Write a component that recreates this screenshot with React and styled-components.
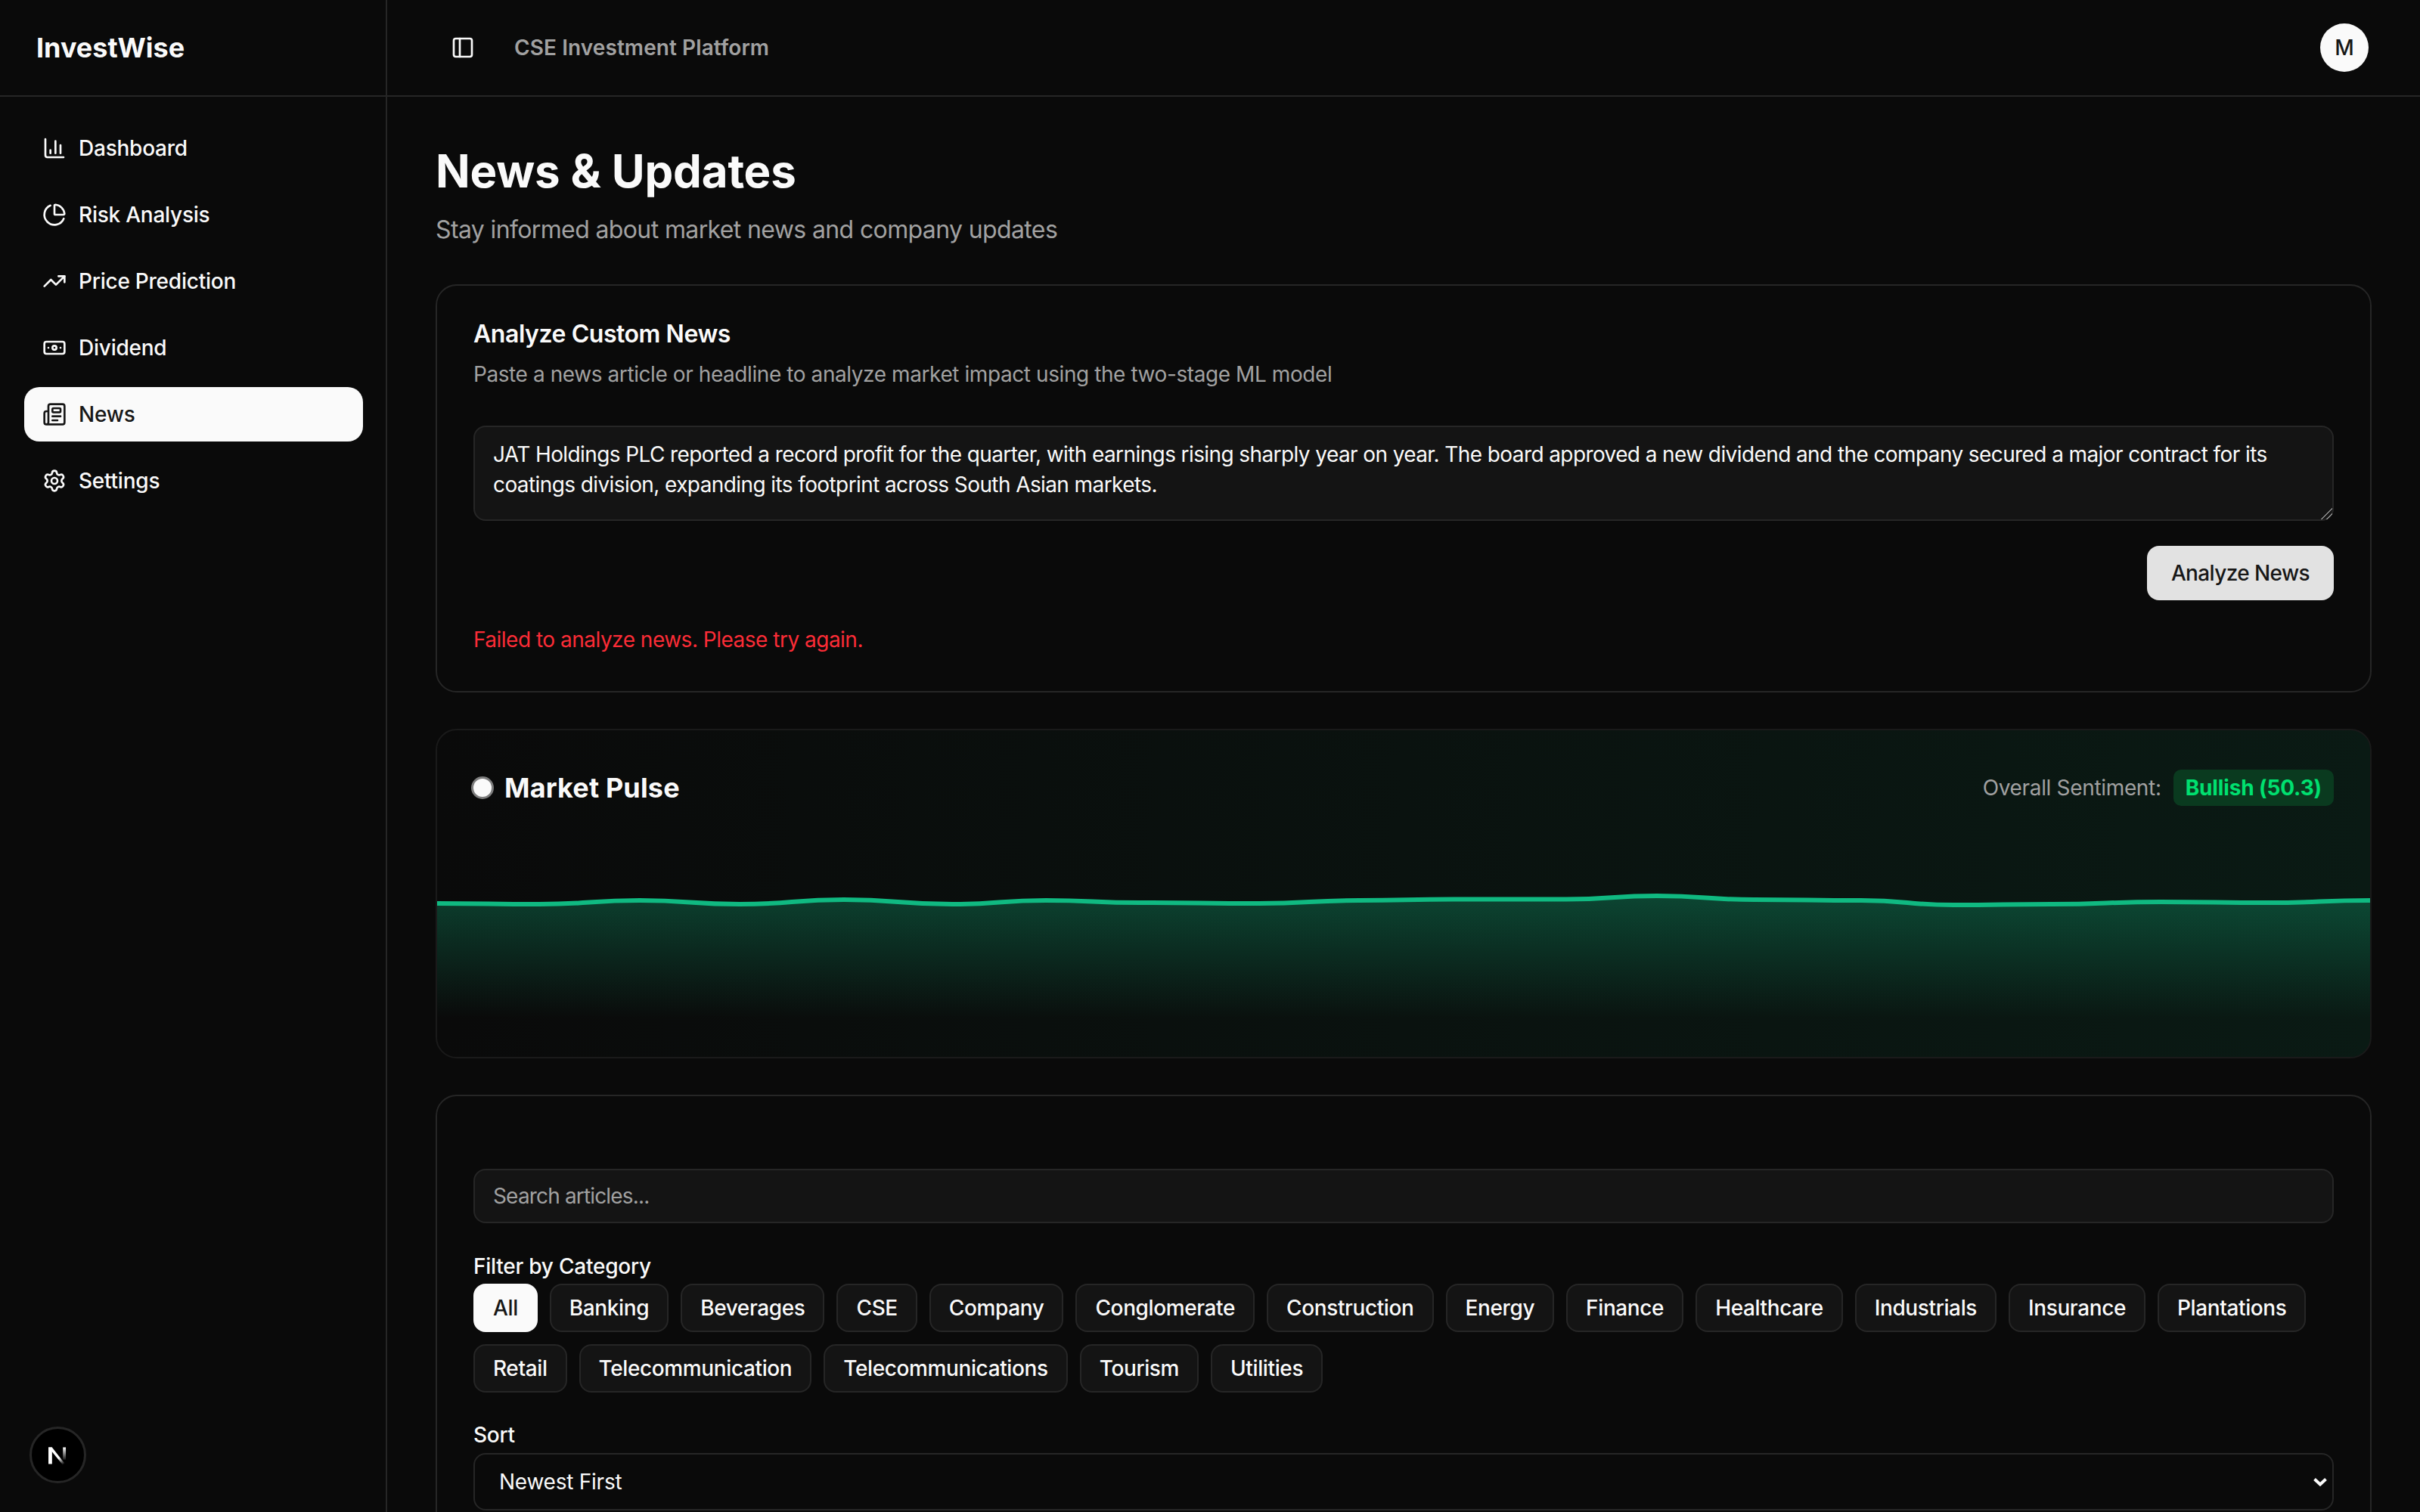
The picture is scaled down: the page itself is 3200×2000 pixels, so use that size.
import React from 'react';
import styled, { createGlobalStyle } from 'styled-components';
import { ChartColumn, ChartPie, TrendingUp, Banknote, Newspaper, Settings, PanelLeft } from 'lucide-react';

const navItems = [
  { label: 'Dashboard', icon: ChartColumn },
  { label: 'Risk Analysis', icon: ChartPie },
  { label: 'Price Prediction', icon: TrendingUp },
  { label: 'Dividend', icon: Banknote },
  { label: 'News', icon: Newspaper, active: true },
  { label: 'Settings', icon: Settings },
];

const categories = [
  'All', 'Banking', 'Beverages', 'CSE', 'Company', 'Conglomerate', 'Construction', 'Energy', 'Finance',
  'Healthcare', 'Industrials', 'Insurance', 'Plantations', 'Retail', 'Telecommunication', 'Telecommunications',
  'Tourism', 'Utilities',
];

const newsText =
  'JAT Holdings PLC reported a record profit for the quarter, with earnings rising sharply year on year. The board approved a new dividend and the company secured a major contract for its coatings division, expanding its footprint across South Asian markets.';

// pulse line, x / y inside the 2556 x 298 chart
const pulse = [
  [0, 95], [135, 96], [268, 91], [400, 96], [538, 90], [681, 96], [805, 91], [929, 94], [1087, 95], [1219, 91],
  [1344, 89.5], [1493, 89.5], [1613, 85], [1742, 90], [1883, 91], [2005, 97], [2135, 96], [2279, 93], [2422, 94], [2556, 91],
];

const smoothPath = (pts) => {
  let d = `M${pts[0][0]},${pts[0][1]}`;
  for (let i = 0; i < pts.length - 1; i++) {
    const [x0, y0] = pts[i];
    const [x1, y1] = pts[i + 1];
    const mid = (x1 - x0) / 2;
    d += ` C${x0 + mid},${y0} ${x1 - mid},${y1} ${x1},${y1}`;
  }
  return d;
};

const linePath = smoothPath(pulse);
const areaPath = `${linePath} L2556,298 L0,298 Z`;

const App = () => (
  <>
    <GlobalStyle />
    <Shell>
      <Sidebar>
        <Brand>InvestWise</Brand>
        <Nav>
          {navItems.map(({ label, icon: Icon, active }) => (
            <NavItem key={label} $active={active}>
              <Icon size={32} />
              {label}
            </NavItem>
          ))}
        </Nav>
        <DevBadge>
          <svg width="72" height="72" viewBox="0 0 72 72" fill="none">
            <defs>
              <linearGradient id="nDiag" x1="0" y1="0" x2="0.6" y2="1">
                <stop offset="0.65" stopColor="#fff" />
                <stop offset="1" stopColor="#fff" stopOpacity="0" />
              </linearGradient>
              <linearGradient id="nBar" x1="0" y1="0" x2="0" y2="1">
                <stop offset="0" stopColor="#fff" />
                <stop offset="1" stopColor="#fff" stopOpacity="0.1" />
              </linearGradient>
            </defs>
            <rect x="23" y="25" width="5" height="23" fill="#fff" />
            <path d="M23 25h5l21 27h-4z" fill="url(#nDiag)" />
            <rect x="43" y="25" width="4" height="17" fill="url(#nBar)" />
          </svg>
        </DevBadge>
      </Sidebar>

      <Column>
        <TopBar>
          <ToggleButton>
            <PanelLeft size={32} />
          </ToggleButton>
          <TopTitle>CSE Investment Platform</TopTitle>
          <Avatar>M</Avatar>
        </TopBar>

        <Main>
          <PageTitle>News &amp; Updates</PageTitle>
          <PageSubtitle>Stay informed about market news and company updates</PageSubtitle>

          <Card>
            <CardTitle>Analyze Custom News</CardTitle>
            <CardDescription>Paste a news article or headline to analyze market impact using the two-stage ML model</CardDescription>
            <NewsInput defaultValue={newsText} />
            <ActionRow>
              <AnalyzeButton>Analyze News</AnalyzeButton>
            </ActionRow>
            <ErrorText>Failed to analyze news. Please try again.</ErrorText>
          </Card>

          <PulseCard>
            <PulseHeader>
              <PulseTitle>
                <PulseDot />
                Market Pulse
              </PulseTitle>
              <Sentiment>
                Overall Sentiment:
                <SentimentBadge>Bullish (50.3)</SentimentBadge>
              </Sentiment>
            </PulseHeader>
            <PulseChart viewBox="0 0 2556 298" preserveAspectRatio="none">
              <defs>
                <linearGradient id="pulseFill" x1="0" y1="0" x2="0" y2="1">
                  <stop offset="0" stopColor="#10b981" stopOpacity="0.3" />
                  <stop offset="0.76" stopColor="#10b981" stopOpacity="0" />
                </linearGradient>
              </defs>
              <path d={areaPath} fill="url(#pulseFill)" />
              <path d={linePath} fill="none" stroke="#10b981" strokeWidth="6" />
            </PulseChart>
          </PulseCard>

          <FilterCard>
            <SearchInput placeholder="Search articles..." />
            <FieldLabel>Filter by Category</FieldLabel>
            <ChipRow>
              {categories.map((c) => (
                <Chip key={c} $active={c === 'All'}>{c}</Chip>
              ))}
            </ChipRow>
            <SortLabel>Sort</SortLabel>
            <SelectWrap>
              <SortSelect defaultValue="newest">
                <option value="newest">Newest First</option>
                <option value="oldest">Oldest First</option>
              </SortSelect>
              <SelectArrow width="18" height="12" viewBox="0 0 18 12" fill="none">
                <path d="M1.5 2.5L9 9.5L16.5 2.5" stroke="#fafafa" strokeWidth="4" />
              </SelectArrow>
            </SelectWrap>
          </FilterCard>
        </Main>
      </Column>
    </Shell>
  </>
);

const GlobalStyle = createGlobalStyle`
  * {
    box-sizing: border-box;
  }
  html, body {
    margin: 0;
    height: 100%;
    background: #0a0a0a;
    overflow: hidden;
  }
  body {
    font-family: Inter, "Noto Sans", sans-serif;
    color: #fafafa;
    letter-spacing: -0.015em;
  }
  button, input, textarea, select {
    font-family: inherit;
    letter-spacing: inherit;
  }
`;

const Shell = styled.div`
  display: flex;
  height: 100vh;
  overflow: hidden;
  background: #0a0a0a;
`;

const Sidebar = styled.aside`
  position: relative;
  flex: 0 0 512px;
  border-right: 2px solid #262626;
`;

const Brand = styled.div`
  height: 128px;
  padding: 0 48px;
  display: flex;
  align-items: center;
  border-bottom: 2px solid #262626;
  font-size: 36px;
  font-weight: 700;
  letter-spacing: 0;
`;

const Nav = styled.nav`
  display: flex;
  flex-direction: column;
  gap: 16px;
  padding: 32px 30px 0 32px;
`;

const NavItem = styled.a`
  display: flex;
  align-items: center;
  gap: 16px;
  height: 72px;
  padding: 0 24px;
  border-radius: 20px;
  font-size: 28px;
  font-weight: 500;
  color: ${(p) => (p.$active ? '#171717' : '#fafafa')};
  background: ${(p) => (p.$active ? '#fafafa' : 'transparent')};
`;

const DevBadge = styled.div`
  position: absolute;
  left: 39px;
  bottom: 38px;
  width: 75px;
  height: 75px;
  border-radius: 50%;
  background: #000;
  border: 3px solid #262626;
  display: flex;
  align-items: center;
  justify-content: center;
`;

const Column = styled.div`
  flex: 1;
  min-width: 0;
  display: flex;
  flex-direction: column;
`;

const TopBar = styled.header`
  flex: 0 0 128px;
  display: flex;
  align-items: center;
  gap: 32px;
  padding: 0 64px;
  border-bottom: 2px solid #262626;
`;

const ToggleButton = styled.button`
  width: 72px;
  height: 72px;
  padding: 0;
  display: flex;
  align-items: center;
  justify-content: center;
  background: none;
  border: none;
  color: #fafafa;
`;

const TopTitle = styled.div`
  flex: 1;
  font-size: 28px;
  font-weight: 600;
  letter-spacing: 0.003em;
  color: #a1a1a1;
`;

const Avatar = styled.div`
  width: 64px;
  height: 64px;
  margin-right: 4px;
  border-radius: 50%;
  background: #fafafa;
  color: #171717;
  font-size: 28px;
  font-weight: 500;
  display: flex;
  align-items: center;
  justify-content: center;
`;

const Main = styled.main`
  flex: 1;
  min-height: 0;
  overflow: hidden;
  padding: 64px;
`;

const PageTitle = styled.h1`
  margin: 0;
  font-size: 60px;
  line-height: 68px;
  font-weight: 700;
  letter-spacing: -0.003em;
`;

const PageSubtitle = styled.p`
  margin: 20px 0 48px;
  font-size: 32px;
  line-height: 48px;
  letter-spacing: -0.0195em;
  color: #a1a1a1;
`;

const Card = styled.section`
  padding: 48px;
  border: 2px solid #262626;
  border-radius: 28px;
  background: #0a0a0a;
`;

const CardTitle = styled.h3`
  margin: 0;
  font-size: 32px;
  line-height: 32px;
  font-weight: 600;
  letter-spacing: -0.014em;
`;

const CardDescription = styled.p`
  margin: 17px 0 48px;
  font-size: 28px;
  line-height: 40px;
  letter-spacing: -0.015em;
  color: #a1a1a1;
`;

const NewsInput = styled.textarea`
  display: block;
  width: 100%;
  height: 126px;
  padding: 16px 24px;
  background: #141414;
  border: 2px solid #262626;
  border-radius: 16px;
  color: #fafafa;
  font-size: 28px;
  line-height: 40px;
  letter-spacing: -0.0213em;
  outline: none;

  &::-webkit-resizer {
    background: linear-gradient(
      135deg,
      transparent 0 48%,
      #8a8a8a 48% 56%,
      transparent 56% 72%,
      #8a8a8a 72% 80%,
      transparent 80%
    );
  }
`;

const ActionRow = styled.div`
  display: flex;
  justify-content: flex-end;
  margin-top: 33px;
`;

const AnalyzeButton = styled.button`
  height: 72px;
  padding: 0 32px;
  border: none;
  border-radius: 16px;
  background: #e2e2e2;
  color: #171717;
  font-size: 28px;
  font-weight: 500;
  letter-spacing: -0.022em;
`;

const ErrorText = styled.p`
  margin: 32px 0 0;
  font-size: 28px;
  line-height: 40px;
  letter-spacing: -0.018em;
  color: #fb2c36;
`;

const PulseCard = styled.section`
  margin-top: 48px;
  border: 2px solid #1a1a1a;
  border-radius: 28px;
  overflow: hidden;
  background: linear-gradient(to right, #0a0a0a, #0a1a14);
`;

const PulseHeader = styled.div`
  display: flex;
  align-items: center;
  justify-content: space-between;
  height: 48px;
  margin: 52px 48px 34px;
`;

const PulseTitle = styled.h3`
  margin: 0;
  display: flex;
  align-items: center;
  gap: 17px;
  font-size: 36px;
  font-weight: 700;
  letter-spacing: 0.004em;
`;

const PulseDot = styled.span`
  width: 24px;
  height: 24px;
  border-radius: 50%;
  background: #fafafa;
  box-shadow: 0 0 0 3px #7d7d7d;
`;

const Sentiment = styled.div`
  display: flex;
  align-items: center;
  gap: 16px;
  font-size: 28px;
  letter-spacing: -0.012em;
  color: #a1a1a1;
`;

const SentimentBadge = styled.span`
  height: 48px;
  padding: 0 16px;
  display: flex;
  align-items: center;
  border-radius: 10px;
  background: #0a3a1f;
  color: #00e070;
  font-weight: 700;
  letter-spacing: -0.005em;
`;

const PulseChart = styled.svg`
  display: block;
  width: 100%;
  height: 298px;
`;

const FilterCard = styled(Card)`
  margin-top: 48px;
  padding-top: 96px;
`;

const SearchInput = styled.input`
  display: block;
  width: 100%;
  height: 72px;
  padding: 0 24px;
  background: #141414;
  border: 2px solid #262626;
  border-radius: 16px;
  color: #fafafa;
  font-size: 28px;
  letter-spacing: -0.03em;
  outline: none;

  &::placeholder {
    color: #a1a1a1;
  }
`;

const FieldLabel = styled.div`
  margin-top: 37px;
  font-size: 28px;
  line-height: 40px;
  font-weight: 500;
`;

const SortLabel = styled(FieldLabel)`
  margin-top: 36px;
`;

const ChipRow = styled.div`
  display: flex;
  flex-wrap: wrap;
  gap: 16px;
  margin-top: 3px;
`;

const Chip = styled.button`
  height: 64px;
  padding: 0 24px;
  border: 2px solid ${(p) => (p.$active ? '#fafafa' : '#262626')};
  border-radius: 16px;
  background: ${(p) => (p.$active ? '#fafafa' : '#141414')};
  color: ${(p) => (p.$active ? '#171717' : '#fafafa')};
  font-size: 28px;
  font-weight: 500;
  letter-spacing: -0.0138em;
`;

const SelectWrap = styled.div`
  position: relative;
  margin-top: 4px;
`;

const SortSelect = styled.select`
  display: block;
  width: 100%;
  height: 76px;
  padding: 0 32px;
  appearance: none;
  background: #0a0a0a;
  border: 2px solid #262626;
  border-radius: 16px;
  color: #fafafa;
  font-size: 28px;
  outline: none;
`;

const SelectArrow = styled.svg`
  position: absolute;
  right: 9px;
  top: 32px;
  pointer-events: none;
`;

export default App;
